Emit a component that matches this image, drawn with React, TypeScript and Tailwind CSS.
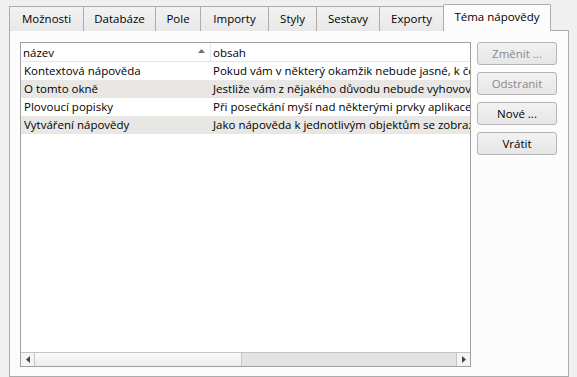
import React from "react";

const tabs = [
  {label: "Možnosti", w: 75},
  {label: "Databáze", w: 73},
  {label: "Pole", w: 46},
  {label: "Importy", w: 69},
  {label: "Styly", w: 49},
  {label: "Sestavy", w: 64},
  {label: "Exporty", w: 65},
];

const rows = [
  ["Kontextová nápověda", "Pokud vám v některý okamžik nebude jasné, k čemu slouží"],
  ["O tomto okně", "Jestliže vám z nějakého důvodu nebude vyhovovat"],
  ["Plovoucí popisky", "Při posečkání myší nad některými prvky aplikace se"],
  ["Vytváření nápovědy", "Jako nápověda k jednotlivým objektům se zobrazí"],
];

function Btn({children, disabled}: {children: React.ReactNode; disabled?: boolean}) {
  return (
    <div
      className={
        "flex h-[23px] w-[80px] items-center justify-center rounded-[3px] border border-[#b4b4b4] bg-gradient-to-b from-[#f2f2f2] to-[#e6e6e6] " +
        (disabled ? "text-[#8a8a8a]" : "text-black")
      }
    >
      {children}
    </div>
  );
}

export default function App() {
  return (
    <div
      className="flex h-[377px] w-[577px] flex-col bg-[#f0f0f0] pl-[9px] pt-[4px] text-[11.5px] text-black"
      style={{fontFamily: '"Open Sans", "Noto Sans", sans-serif'}}
    >
      {/* tabs */}
      <div className="relative z-10 flex h-[27px] items-end">
        {tabs.map((t, i) => (
          <div
            key={t.label}
            style={{width: t.w}}
            className={
              "flex h-[25px] items-center justify-center border border-b-0 border-[#acacac] bg-gradient-to-b from-[#f2f2f2] to-[#e8e8e8] pb-[1px] " +
              (i > 0 ? "-ml-px" : "")
            }
          >
            {t.label}
          </div>
        ))}
        <div className="-ml-px flex h-[27px] w-[108px] items-center justify-center rounded-t-[2px] border border-b-0 border-[#acacac] bg-[#fcfcfc] pb-[2px]">
          Téma nápovědy
        </div>
      </div>

      {/* pane */}
      <div className="-mt-px flex h-[347px] w-[560px] gap-[6px] border border-[#acacac] bg-[#fcfcfc] pl-[10px] pt-[11px]">
        <div className="flex h-[325px] w-[451px] flex-col border border-[#a0a0a0] bg-white">
          <div className="flex h-[19px] border-b border-[#e5e5e5]">
            <div className="relative flex w-[190px] items-center border-r border-[#e5e5e5] pl-[2px] pt-[1px]">
              název
              <svg className="absolute right-[5px] top-[6px]" width="7" height="4" viewBox="0 0 7 4">
                <path d="M0 4 L3.5 0 L7 4 Z" fill="#6d6d6d" />
              </svg>
            </div>
            <div className="flex items-center pl-[2px] pt-[1px]">obsah</div>
          </div>
          <div className="flex-1 overflow-hidden">
            {rows.map((r, i) => (
              <div key={r[0]} className={"flex h-[18px] items-center " + (i % 2 ? "bg-[#e9e7e3]" : "")}>
                <div className="w-[190px] shrink-0 pl-[3px]">{r[0]}</div>
                <div className="shrink-0 whitespace-nowrap pl-[2px]">{r[1]}</div>
              </div>
            ))}
          </div>
          {/* horizontal scrollbar */}
          <div className="flex h-[14px] border-t border-[#c4c4c4] bg-[#e3e3e3]">
            <div className="flex w-[14px] items-center justify-center border-r border-[#c4c4c4] bg-[#f4f4f4]">
              <svg width="4" height="7" viewBox="0 0 4 7">
                <path d="M4 0 L0 3.5 L4 7 Z" fill="#444" />
              </svg>
            </div>
            <div className="w-[207px] border-r border-[#c4c4c4] bg-gradient-to-b from-[#fafafa] to-[#ededed]" />
            <div className="flex-1" />
            <div className="flex w-[14px] items-center justify-center border-l border-[#c4c4c4] bg-[#f4f4f4]">
              <svg width="4" height="7" viewBox="0 0 4 7">
                <path d="M0 0 L4 3.5 L0 7 Z" fill="#444" />
              </svg>
            </div>
          </div>
        </div>

        <div className="flex flex-col gap-[7px]">
          <Btn disabled>Změnit ...</Btn>
          <Btn disabled>Odstranit</Btn>
          <Btn>Nové ...</Btn>
          <Btn>Vrátit</Btn>
        </div>
      </div>
    </div>
  );
}
